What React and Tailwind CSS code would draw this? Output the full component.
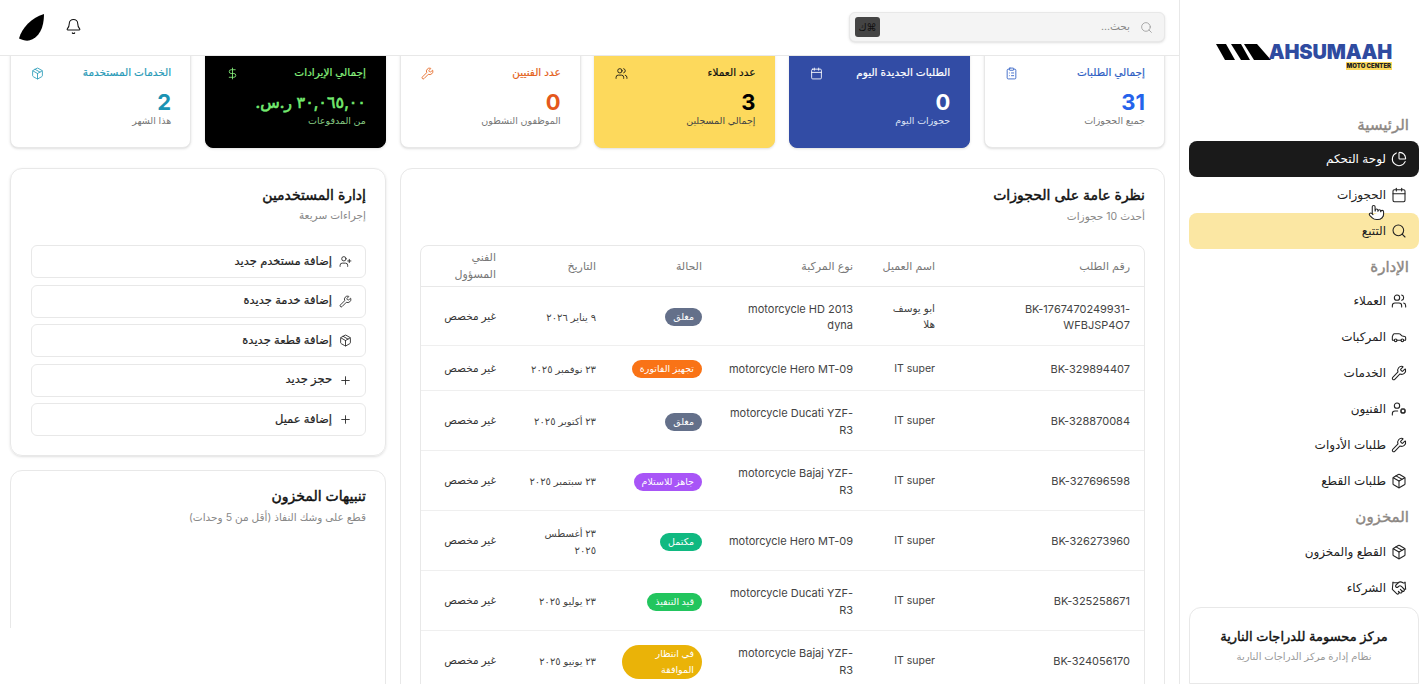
import React from "react";
import {
  Bell, Calendar, ChartPie, Car, ClipboardList, DollarSign, Handshake, Package,
  Plus, Pointer, Search, UserCog, UserPlus, Users, Wrench,
} from "lucide-react";

const navGroups = [
  {
    title: "الرئيسية",
    items: [
      { label: "لوحة التحكم", icon: ChartPie, cls: "bg-[#1a1a1a] text-white" },
      { label: "الحجوزات", icon: Calendar, cls: "text-[#222]" },
      { label: "التتبع", icon: Search, cls: "bg-[#fbe7a3] text-[#222]" },
    ],
  },
  {
    title: "الإدارة",
    items: [
      { label: "العملاء", icon: Users },
      { label: "المركبات", icon: Car },
      { label: "الخدمات", icon: Wrench },
      { label: "الفنيون", icon: UserCog },
      { label: "طلبات الأدوات", icon: Wrench },
      { label: "طلبات القطع", icon: Package },
    ],
  },
  {
    title: "المخزون",
    items: [
      { label: "القطع والمخزون", icon: Package },
      { label: "الشركاء", icon: Handshake },
    ],
  },
];

const stats = [
  { title: "إجمالي الطلبات", value: "31", sub: "جميع الحجوزات", icon: ClipboardList, card: "bg-white border-[#e8e8e8]", head: "text-[#2f5fc4]", val: "text-[22px] font-bold text-[#2563eb]", note: "text-[#777]" },
  { title: "الطلبات الجديدة اليوم", value: "0", sub: "حجوزات اليوم", icon: Calendar, card: "bg-[#324ca5] border-[#324ca5]", head: "text-white", val: "text-[22px] font-bold text-white", note: "text-[#dbe2f5]" },
  { title: "عدد العملاء", value: "3", sub: "إجمالي المسجلين", icon: Users, card: "bg-[#fdd95c] border-[#fdd95c]", head: "text-[#111]", val: "text-[22px] font-bold text-black", note: "text-[#444]" },
  { title: "عدد الفنيين", value: "0", sub: "الموظفون النشطون", icon: Wrench, card: "bg-white border-[#e8e8e8]", head: "text-[#e4621c]", val: "text-[22px] font-bold text-[#e4581c]", note: "text-[#777]" },
  { title: "إجمالي الإيرادات", value: "٣٠,٠٦٥,٠٠ ر.س.", sub: "من المدفوعات", icon: DollarSign, card: "bg-black border-black", head: "text-[#86ef7c]", val: "text-[16px] font-normal text-[#74ea70] [-webkit-text-stroke:0.6px]", note: "text-[#86c982]" },
  { title: "الخدمات المستخدمة", value: "2", sub: "هذا الشهر", icon: Package, card: "bg-white border-[#e8e8e8]", head: "text-[#2a9bb8]", val: "text-[22px] font-bold text-[#1b93b3]", note: "text-[#777]" },
];

const actions = [
  { label: "إضافة مستخدم جديد", icon: UserPlus },
  { label: "إضافة خدمة جديدة", icon: Wrench },
  { label: "إضافة قطعة جديدة", icon: Package },
  { label: "حجز جديد", icon: Plus },
  { label: "إضافة عميل", icon: Plus },
];

const bookings = [
  { id: "BK-1767470249931-WFBJSP4O7", client: "ابو يوسف هلا", vehicle: "motorcycle HD 2013 dyna", status: "مغلق", color: "bg-[#64708a]", date: "٩ يناير ٢٠٢٦", h: "h-[59px]" },
  { id: "BK-329894407", client: "IT super", vehicle: "motorcycle Hero MT-09", status: "تجهيز الفاتورة", color: "bg-[#f97316]", date: "٢٣ نوفمبر ٢٠٢٥", h: "h-[45px]" },
  { id: "BK-328870084", client: "IT super", vehicle: "motorcycle Ducati YZF-R3", status: "مغلق", color: "bg-[#64708a]", date: "٢٣ أكتوبر ٢٠٢٥", h: "h-[60px]" },
  { id: "BK-327696598", client: "IT super", vehicle: "motorcycle Bajaj YZF-R3", status: "جاهز للاستلام", color: "bg-[#a855f7]", date: "٢٣ سبتمبر ٢٠٢٥", h: "h-[60px]" },
  { id: "BK-326273960", client: "IT super", vehicle: "motorcycle Hero MT-09", status: "مكتمل", color: "bg-[#10b981]", date: "٢٣ أغسطس ٢٠٢٥", h: "h-[60px]" },
  { id: "BK-325258671", client: "IT super", vehicle: "motorcycle Ducati YZF-R3", status: "قيد التنفيذ", color: "bg-[#22c55e]", date: "٢٣ يوليو ٢٠٢٥", h: "h-[60px]" },
  { id: "BK-324056170", client: "IT super", vehicle: "motorcycle Bajaj YZF-R3", status: "في انتظار الموافقة", color: "bg-[#eab308]", date: "٢٣ يونيو ٢٠٢٥", h: "h-[60px]" },
];

const Sidebar = () => (
  <aside className="w-[243px] shrink-0 border-l border-[#e8e8e8] bg-white pr-[3px] pl-[9px] flex flex-col">
    {/* Logo */}
    <div className="h-[107px] shrink-0 flex justify-center pt-[44px]" dir="ltr">
      <div className="flex flex-col items-end">
        <div className="flex items-center">
          <svg width="55" height="16" viewBox="0 0 55 16" className="mr-[-2px]">
            <path d="M0 0h10l9 16H9zM15 0h10l9 16h-9zM28 0h13l14 16H38z" fill="#000" />
          </svg>
          <span className="text-[20px] leading-[16px] font-black text-[#2f4ba0] tracking-[-0.2px]">AHSUMAAH</span>
        </div>
        <span className="mt-[2px] bg-[#fdd95c] px-[1px] text-[6px] leading-[8px] font-black text-[#222]">MOTO CENTER</span>
      </div>
    </div>

    {/* Nav */}
    {navGroups.map((group, i) => (
      <div key={group.title}>
        <div className={`${i === 2 ? "h-[35px]" : "h-[34px]"} flex items-center pr-[10px] pt-[2px] text-[15px] font-normal text-[#8c8783] [-webkit-text-stroke:0.4px]`}>{group.title}</div>
        {group.items.map(({ label, icon: Icon, cls }) => (
          <div key={label} className={`h-[36px] flex items-center gap-[5px] rounded-lg pr-[12px] text-[12px] ${cls || "text-[#222]"}`}>
            <Icon size={16} strokeWidth={1.6} />
            <span>{label}</span>
          </div>
        ))}
      </div>
    ))}

    {/* Footer card */}
    <div className="mt-[1px] flex-1 rounded-t-xl border border-[#e8e8e8] text-center pt-[18px]">
      <div className="text-[13px] leading-[20px] font-normal text-[#111] [-webkit-text-stroke:0.4px]">مركز محسومة للدراجات النارية</div>
      <div className="mt-[2px] text-[10px] leading-[16px] text-[#999]">نظام إدارة مركز الدراجات النارية</div>
    </div>
  </aside>
);

const Header = () => (
  <header className="h-[56px] shrink-0 border-b border-[#e8e8e8] bg-white flex items-center justify-between pr-[14px] pl-[19px] relative z-10">
    <div className="w-[316px] h-[30px] mb-[1px] rounded-md border border-[#e8e8e8] bg-[#f4f4f4] shadow-sm flex items-center pr-[11px] pl-[5px]">
      <Search size={13} strokeWidth={1.5} className="text-[#999]" />
      <span className="mr-[10px] text-[10.500px] text-[#888]">بحث...</span>
      <span className="mr-auto w-[25px] h-[20px] rounded-[3px] bg-[#444] flex items-center justify-center text-[10px] text-[#111]">⌘ك</span>
    </div>
    <div className="flex items-center gap-[21px]">
      <Bell size={17} strokeWidth={1.5} className="text-[#111] mb-[2px]" />
      <svg width="25" height="27" viewBox="0 0 25 27">
        <path d="M25 0C25 14 20 24 10 26.5C7 27 3 26 0 24.500C3 14 12 4 25 0Z" fill="#000" />
      </svg>
    </div>
  </header>
);

const StatCard = ({ title, value, sub, icon: Icon, card, head, val, note }) => (
  <div className={`h-[110px] rounded-lg border shadow-sm pr-[19px] pl-[20px] pt-[25px] ${card}`}>
    <div className="flex items-center justify-between">
      <span className={`text-[10.500px] leading-[18px] [-webkit-text-stroke:0.2px] ${head}`}>{title}</span>
      <Icon size={13} strokeWidth={1.6} className={head} />
    </div>
    <div className={`mt-[9px] leading-[22px] whitespace-nowrap ${val}`}>{value}</div>
    <div className={`mt-[1px] text-[9.500px] leading-[14px] ${note}`}>{sub}</div>
  </div>
);

const BookingsTable = () => (
  <div className="mt-[20px] rounded-lg border border-[#e8e8e8] overflow-hidden">
    <table className="w-full table-fixed border-collapse text-[11px]">
      <thead>
        <tr className="h-[40px] border-b border-[#e8e8e8] text-[#777]">
          <th className="w-[195px] pr-[14px] text-right font-normal">رقم الطلب</th>
          <th className="w-[82px] pr-[14px] text-right font-normal">اسم العميل</th>
          <th className="w-[151px] pr-[14px] text-right font-normal">نوع المركبة</th>
          <th className="w-[106px] pr-[14px] text-right font-normal">الحالة</th>
          <th className="w-[100px] pr-[14px] text-right font-normal">التاريخ</th>
          <th className="pr-[14px] pl-[20px] text-right font-normal leading-[17px]">الفني المسؤول</th>
        </tr>
      </thead>
      <tbody className="text-[#444]">
        {bookings.map((b) => (
          <tr key={b.id} className={`${b.h} border-b border-[#efefef] leading-[16.500px]`}>
            <td className="pr-[14px] pl-[10px] pt-[3px] break-words">{b.id}</td>
            <td className="pr-[14px] pl-[15px] pt-[3px] text-[10.500px]">{b.client}</td>
            <td className="pr-[14px] pl-[11px] pt-[3px]">{b.vehicle}</td>
            <td className="pr-[14px] pt-[3px]">
              <span className={`inline-block rounded-full px-[8px] py-[1px] text-[9.500px] font-medium leading-[16px] text-white ${b.color} ${b.status.length > 15 ? "w-[80px] py-[0px]" : ""}`}>{b.status}</span>
            </td>
            <td className="pr-[14px] pl-[15px] pt-[3px] text-[10px]">{b.date}</td>
            <td className="pr-[14px] pt-[3px] text-[10.500px] text-[#333]">غير مخصص</td>
          </tr>
        ))}
      </tbody>
    </table>
  </div>
);

export default function App() {
  return (
    <div dir="rtl" className="relative flex h-[684px] w-[1422px] overflow-hidden bg-white font-['Inter','Noto_Sans','DejaVu_Sans',sans-serif]">
      <Sidebar />
      <main className="relative flex-1 min-w-0 flex flex-col overflow-hidden">
        <Header />
        <div className="pr-[14px] pl-[10px]">
          {/* Stat cards, page is scrolled so their tops are under the header */}
          <div className="-mt-[18px] grid grid-cols-6 gap-[13.600px]">
            {stats.map((s) => <StatCard key={s.title} {...s} />)}
          </div>

          <div className="mt-[20px] grid grid-cols-[765px_376px] gap-[14px]">
            <section className="h-[600px] rounded-xl border border-[#e8e8e8] px-[19px] pt-[14px]">
              <h2 className="text-[14px] leading-[24px] font-normal text-[#111] [-webkit-text-stroke:0.45px]">نظرة عامة على الحجوزات</h2>
              <p className="mt-[2px] text-[10.500px] leading-[16px] text-[#888]">أحدث 10 حجوزات</p>
              <BookingsTable />
            </section>

            <div className="flex flex-col gap-[14px]">
              <section className="h-[288px] rounded-xl border border-[#e8e8e8] shadow-sm pr-[19px] pl-[20px] pt-[14px]">
                <h2 className="text-[14px] leading-[24px] font-normal text-[#111] [-webkit-text-stroke:0.45px]">إدارة المستخدمين</h2>
                <p className="mt-[1px] text-[10.500px] leading-[16px] text-[#888]">إجراءات سريعة</p>
                <div className="mt-[21px] flex flex-col gap-[6.500px]">
                  {actions.map(({ label, icon: Icon }) => (
                    <button key={label} className="h-[33px] rounded-md border border-[#e8e8e8] bg-white flex items-center gap-[7px] pr-[13px] text-[11.500px] text-[#222] [-webkit-text-stroke:0.2px]">
                      <Icon size={13} strokeWidth={1.6} />
                      <span>{label}</span>
                    </button>
                  ))}
                </div>
              </section>
              <section className="h-[300px] rounded-xl border border-[#e8e8e8] pr-[19px] pl-[20px] pt-[13px]">
                <h2 className="text-[14px] leading-[24px] font-normal text-[#111] [-webkit-text-stroke:0.45px]">تنبيهات المخزون</h2>
                <p className="mt-[2px] text-[10.500px] leading-[16px] text-[#888]">قطع على وشك النفاذ (أقل من 5 وحدات)</p>
              </section>
            </div>
          </div>
        </div>
        {/* white patch over the bottom left edge of the inventory card */}
        <div className="absolute left-0 top-[628px] h-[56px] w-[14px] bg-white" />
      </main>
      {/* mouse pointer over the nav */}
      <Pointer size={17} strokeWidth={1.5} className="absolute left-[1368px] top-[204px] fill-white text-[#222]" />
    </div>
  );
}
